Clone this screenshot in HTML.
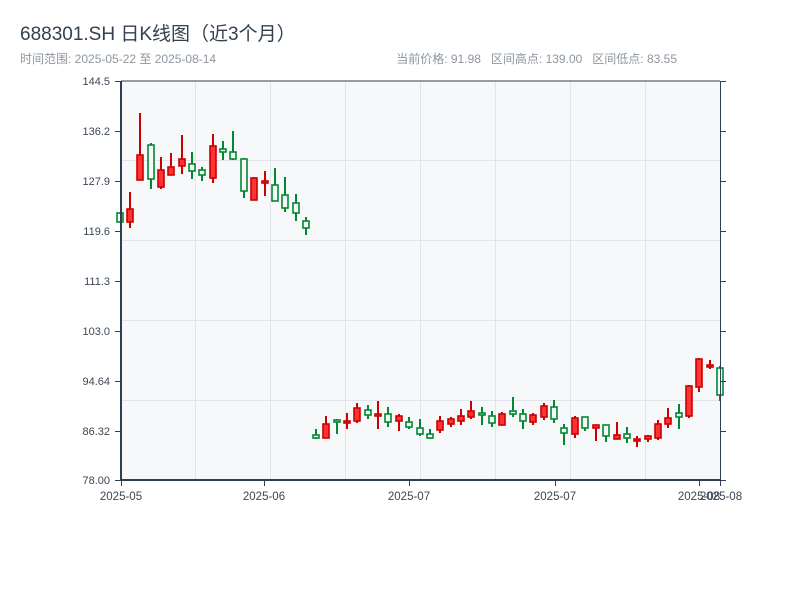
<!DOCTYPE html>
<html><head><meta charset="utf-8"><style>
body{margin:0;background:#fff;width:800px;height:600px;overflow:hidden;font-family:"Liberation Sans","Noto Sans CJK SC",sans-serif}
.r path{stroke:#cc0000;stroke-width:2;fill:none}.r rect{fill:#ff3333;stroke:#cc0000;stroke-width:1.6}
.g path{stroke:#008833;stroke-width:2;fill:none}.g rect{fill:#f7f8fa;stroke:#008833;stroke-width:1.6}
</style></head><body>
<svg width="800" height="600" xmlns="http://www.w3.org/2000/svg" font-family="Liberation Sans, Noto Sans CJK SC, sans-serif">
<text x="20" y="40" font-size="19" fill="#34404f">688301.SH 日K线图（近3个月）</text>
<text x="20" y="63" font-size="12" fill="#8e969e">时间范围: 2025-05-22 至 2025-08-14</text>
<text x="677" y="63" font-size="12" fill="#8e969e" text-anchor="end" style="white-space:pre">当前价格: 91.98   区间高点: 139.00   区间低点: 83.55</text>
<rect x="121" y="81" width="599" height="399" fill="#f7f8fa"/>
<g stroke="#e1e4e8" stroke-width="1">
<line x1="195.5" y1="81" x2="195.5" y2="480"/><line x1="270.5" y1="81" x2="270.5" y2="480"/><line x1="345.5" y1="81" x2="345.5" y2="480"/><line x1="420.5" y1="81" x2="420.5" y2="480"/><line x1="495.5" y1="81" x2="495.5" y2="480"/><line x1="570.5" y1="81" x2="570.5" y2="480"/><line x1="645.5" y1="81" x2="645.5" y2="480"/>
<line x1="121" y1="160.5" x2="720" y2="160.5"/><line x1="121" y1="240.5" x2="720" y2="240.5"/><line x1="121" y1="320.5" x2="720" y2="320.5"/><line x1="121" y1="400.5" x2="720" y2="400.5"/>
</g>
<g class="g"><path d="M120 213V222"/><rect x="117" y="213" width="6" height="9"/></g>
<g class="r"><path d="M130 192V228"/><rect x="127" y="209" width="6" height="13"/></g>
<g class="r"><path d="M140 113V180"/><rect x="137" y="155" width="6" height="25"/></g>
<g class="g"><path d="M151 143V189"/><rect x="148" y="145" width="6" height="34"/></g>
<g class="r"><path d="M161 157V189"/><rect x="158" y="170" width="6" height="17"/></g>
<g class="r"><path d="M171 153V175"/><rect x="168" y="167" width="6" height="8"/></g>
<g class="r"><path d="M182 135V174"/><rect x="179" y="159" width="6" height="7"/></g>
<g class="g"><path d="M192 152V179"/><rect x="189" y="164" width="6" height="7"/></g>
<g class="g"><path d="M202 167V181"/><rect x="199" y="170" width="6" height="5"/></g>
<g class="r"><path d="M213 134V183"/><rect x="210" y="146" width="6" height="32"/></g>
<g class="g"><path d="M223 141V160"/><rect x="220" y="149" width="6" height="3"/></g>
<g class="g"><path d="M233 131V160"/><rect x="230" y="152" width="6" height="7"/></g>
<g class="g"><path d="M244 158V198"/><rect x="241" y="159" width="6" height="32"/></g>
<g class="r"><path d="M254 177V200"/><rect x="251" y="178" width="6" height="22"/></g>
<g class="r"><path d="M265 171V196"/><rect x="262" y="181" width="6" height="2"/></g>
<g class="g"><path d="M275 168V201"/><rect x="272" y="185" width="6" height="16"/></g>
<g class="g"><path d="M285 177V212"/><rect x="282" y="195" width="6" height="13"/></g>
<g class="g"><path d="M296 194V221"/><rect x="293" y="203" width="6" height="10"/></g>
<g class="g"><path d="M306 217V235"/><rect x="303" y="221" width="6" height="7"/></g>
<g class="g"><path d="M316 429V439"/><rect x="313" y="435" width="6" height="3"/></g>
<g class="r"><path d="M326 416V438"/><rect x="323" y="424" width="6" height="14"/></g>
<g class="g"><path d="M337 419V434"/><rect x="334" y="420" width="6" height="2"/></g>
<g class="r"><path d="M347 413V429"/><rect x="344" y="421" width="6" height="2"/></g>
<g class="r"><path d="M357 403V423"/><rect x="354" y="408" width="6" height="13"/></g>
<g class="g"><path d="M368 405V419"/><rect x="365" y="410" width="6" height="5"/></g>
<g class="r"><path d="M378 401V429"/><rect x="375" y="414" width="6" height="2"/></g>
<g class="g"><path d="M388 407V427"/><rect x="385" y="414" width="6" height="8"/></g>
<g class="r"><path d="M399 414V431"/><rect x="396" y="416" width="6" height="5"/></g>
<g class="g"><path d="M409 417V429"/><rect x="406" y="422" width="6" height="5"/></g>
<g class="g"><path d="M420 419V436"/><rect x="417" y="428" width="6" height="6"/></g>
<g class="g"><path d="M430 429V439"/><rect x="427" y="434" width="6" height="4"/></g>
<g class="r"><path d="M440 416V433"/><rect x="437" y="421" width="6" height="9"/></g>
<g class="r"><path d="M451 417V427"/><rect x="448" y="419" width="6" height="5"/></g>
<g class="r"><path d="M461 409V425"/><rect x="458" y="416" width="6" height="5"/></g>
<g class="r"><path d="M471 401V419"/><rect x="468" y="411" width="6" height="6"/></g>
<g class="g"><path d="M482 407V425"/><rect x="479" y="413" width="6" height="2"/></g>
<g class="g"><path d="M492 411V427"/><rect x="489" y="416" width="6" height="7"/></g>
<g class="r"><path d="M502 412V425"/><rect x="499" y="414" width="6" height="11"/></g>
<g class="g"><path d="M513 397V417"/><rect x="510" y="411" width="6" height="3"/></g>
<g class="g"><path d="M523 409V429"/><rect x="520" y="414" width="6" height="7"/></g>
<g class="r"><path d="M533 413V425"/><rect x="530" y="415" width="6" height="7"/></g>
<g class="r"><path d="M544 403V420"/><rect x="541" y="406" width="6" height="11"/></g>
<g class="g"><path d="M554 400V423"/><rect x="551" y="407" width="6" height="12"/></g>
<g class="g"><path d="M564 424V445"/><rect x="561" y="428" width="6" height="5"/></g>
<g class="r"><path d="M575 416V438"/><rect x="572" y="418" width="6" height="16"/></g>
<g class="g"><path d="M585 417V431"/><rect x="582" y="417" width="6" height="11"/></g>
<g class="r"><path d="M596 425V441"/><rect x="593" y="425" width="6" height="3"/></g>
<g class="g"><path d="M606 425V442"/><rect x="603" y="425" width="6" height="11"/></g>
<g class="r"><path d="M617 422V439"/><rect x="614" y="435" width="6" height="4"/></g>
<g class="g"><path d="M627 427V443"/><rect x="624" y="434" width="6" height="4"/></g>
<g class="r"><path d="M637 436V447"/><rect x="634" y="439" width="6" height="2"/></g>
<g class="r"><path d="M648 435V442"/><rect x="645" y="436" width="6" height="3"/></g>
<g class="r"><path d="M658 420V440"/><rect x="655" y="424" width="6" height="14"/></g>
<g class="r"><path d="M668 408V428"/><rect x="665" y="418" width="6" height="6"/></g>
<g class="g"><path d="M679 404V429"/><rect x="676" y="413" width="6" height="4"/></g>
<g class="r"><path d="M689 385V418"/><rect x="686" y="386" width="6" height="30"/></g>
<g class="r"><path d="M699 358V392"/><rect x="696" y="359" width="6" height="28"/></g>
<g class="r"><path d="M710 360V369"/><rect x="707" y="365" width="6" height="2"/></g>
<g class="g"><path d="M720 366V401"/><rect x="717" y="368" width="6" height="27"/></g>
<g stroke="#2f3e50" fill="none">
<line x1="121" y1="81" x2="121" y2="481" stroke-width="2"/>
<line x1="120" y1="480" x2="721" y2="480" stroke-width="2"/>
<line x1="121" y1="81" x2="720" y2="81" stroke-width="1"/>
<line x1="720.5" y1="81" x2="720.5" y2="480" stroke-width="1"/>
<g stroke-width="1">
<line x1="115" y1="81.5" x2="121" y2="81.5"/><line x1="115" y1="131.5" x2="121" y2="131.5"/><line x1="115" y1="181.5" x2="121" y2="181.5"/><line x1="115" y1="231.5" x2="121" y2="231.5"/><line x1="115" y1="281.5" x2="121" y2="281.5"/><line x1="115" y1="331.5" x2="121" y2="331.5"/><line x1="115" y1="381.5" x2="121" y2="381.5"/><line x1="115" y1="431.5" x2="121" y2="431.5"/><line x1="115" y1="480.5" x2="121" y2="480.5"/>
<line x1="720" y1="81.5" x2="726" y2="81.5"/><line x1="720" y1="131.5" x2="726" y2="131.5"/><line x1="720" y1="181.5" x2="726" y2="181.5"/><line x1="720" y1="231.5" x2="726" y2="231.5"/><line x1="720" y1="281.5" x2="726" y2="281.5"/><line x1="720" y1="331.5" x2="726" y2="331.5"/><line x1="720" y1="381.5" x2="726" y2="381.5"/><line x1="720" y1="431.5" x2="726" y2="431.5"/><line x1="720" y1="480.5" x2="726" y2="480.5"/>
<line x1="121.5" y1="480" x2="121.5" y2="486"/><line x1="264.5" y1="480" x2="264.5" y2="486"/><line x1="409.5" y1="480" x2="409.5" y2="486"/><line x1="555.5" y1="480" x2="555.5" y2="486"/><line x1="699.5" y1="480" x2="699.5" y2="486"/><line x1="720.5" y1="480" x2="720.5" y2="486"/>
</g></g>
<g font-size="11" fill="#3d4753" text-anchor="end">
<text x="110" y="85">144.5</text><text x="110" y="135">136.2</text><text x="110" y="185">127.9</text><text x="110" y="235">119.6</text><text x="110" y="285">111.3</text><text x="110" y="335">103.0</text><text x="110" y="385">94.64</text><text x="110" y="435">86.32</text><text x="110" y="484">78.00</text>
</g>
<g font-size="11.5" fill="#3d4753" text-anchor="middle">
<text x="121" y="500">2025-05</text><text x="264" y="500">2025-06</text><text x="409" y="500">2025-07</text><text x="555" y="500">2025-07</text><text x="699" y="500">2025-08</text><text x="721" y="500">2025-08</text>
</g>
</svg>
</body></html>
